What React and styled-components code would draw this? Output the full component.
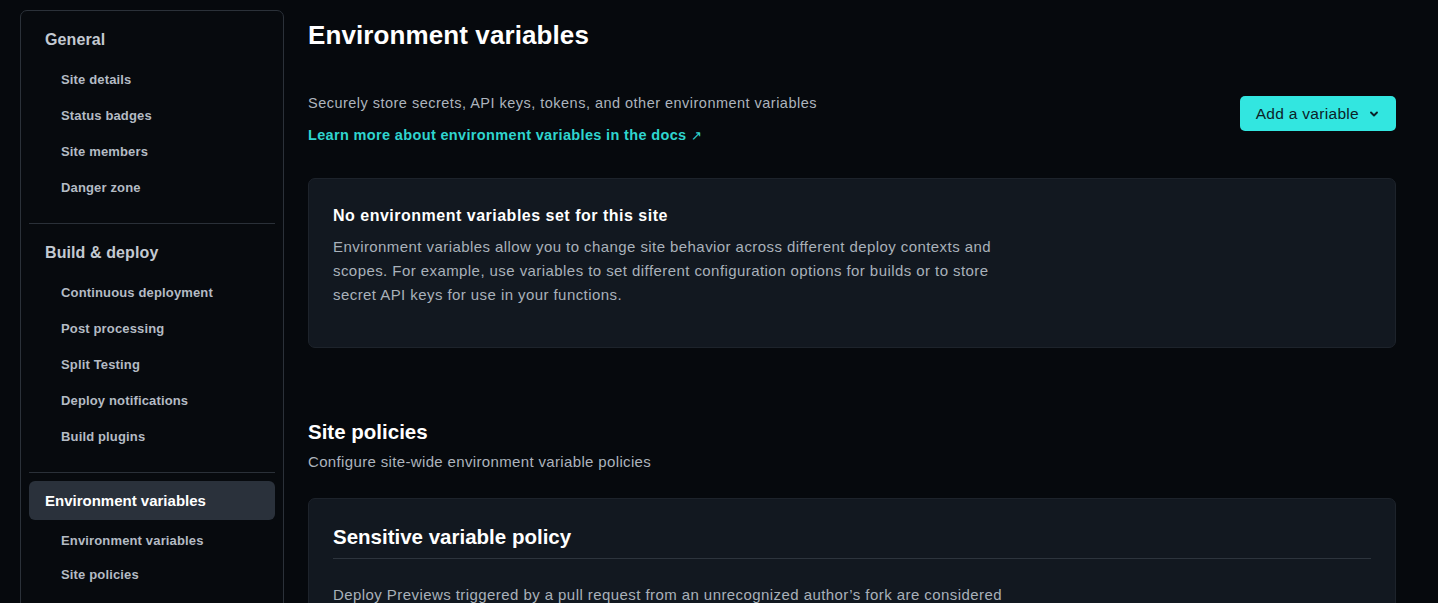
import React from "react";
import styled, { createGlobalStyle } from "styled-components";

const GlobalStyle = createGlobalStyle`
    body {
        margin: 0;
        background: #06090d;
        font-family: "Liberation Sans", Arial, sans-serif;
        color: #e8ebef;
    }
`;

const nav = [
    {
        title: "General",
        items: ["Site details", "Status badges", "Site members", "Danger zone"],
    },
    {
        title: "Build & deploy",
        items: ["Continuous deployment", "Post processing", "Split Testing", "Deploy notifications", "Build plugins"],
    },
];

const Chevron = () => (
    <svg width="10" height="10" viewBox="0 0 10 10" fill="none">
        <path d="M2 3.5L5 6.5L8 3.5" stroke="#0b2328" strokeWidth="1.9" strokeLinecap="round" strokeLinejoin="round" />
    </svg>
);

const App = () => {
    return (
        <Page>
            <GlobalStyle />
            <Sidebar>
                {nav.map((group) => (
                    <Group key={group.title}>
                        <GroupTitle>{group.title}</GroupTitle>
                        {group.items.map((item) => (
                            <NavItem key={item}>{item}</NavItem>
                        ))}
                    </Group>
                ))}
                <ActiveGroup>
                    <ActiveItem>Environment variables</ActiveItem>
                    <SubItem>Environment variables</SubItem>
                    <SubItem>Site policies</SubItem>
                </ActiveGroup>
            </Sidebar>
            <Main>
                <PageTitle>Environment variables</PageTitle>
                <HeaderRow>
                    <div>
                        <Lead>Securely store secrets, API keys, tokens, and other environment variables</Lead>
                        <DocLink href="#">Learn more about environment variables in the docs <span>↗</span></DocLink>
                    </div>
                    <AddButton>
                        Add a variable
                        <Chevron />
                    </AddButton>
                </HeaderRow>
                <Card>
                    <CardTitle>No environment variables set for this site</CardTitle>
                    <CardText>
                        Environment variables allow you to change site behavior across different deploy contexts and
                        scopes. For example, use variables to set different configuration options for builds or to store
                        secret API keys for use in your functions.
                    </CardText>
                </Card>
                <SectionTitle>Site policies</SectionTitle>
                <SectionSub>Configure site-wide environment variable policies</SectionSub>
                <PolicyCard>
                    <PolicyTitle>Sensitive variable policy</PolicyTitle>
                    <CardText>
                        Deploy Previews triggered by a pull request from an unrecognized author’s fork are considered
                    </CardText>
                </PolicyCard>
            </Main>
        </Page>
    );
};

export default App;

const Page = styled.div`
    display: flex;
    gap: 24px;
    padding: 10px 42px 0 20px;
    height: 603px;
    overflow: hidden;
    box-sizing: border-box;
`;

const Sidebar = styled.nav`
    flex: 0 0 264px;
    box-sizing: border-box;
    border: 1px solid #2b3139;
    border-radius: 7px;
    background: #070a0e;
    padding: 0 8px;
    height: 640px;
`;

const Group = styled.div`
    padding: 11px 0 17px;
    border-bottom: 1px solid #2a3038;
`;

const GroupTitle = styled.div`
    padding-left: 16px;
    line-height: 36px;
    margin-bottom: 4px;
    font-size: 16px;
    font-weight: 600;
    color: #c3c9d1;
    letter-spacing: 0.1px;
`;

const NavItem = styled.div`
    padding-left: 32px;
    line-height: 36px;
    font-size: 13px;
    font-weight: 700;
    color: #b4bbc4;
    letter-spacing: 0.15px;
`;

const ActiveGroup = styled.div`
    padding-top: 8px;
`;

const ActiveItem = styled.div`
    height: 39px;
    line-height: 39px;
    padding-left: 16px;
    border-radius: 6px;
    background: #2a313b;
    color: #ffffff;
    font-size: 15px;
    font-weight: 700;
    margin-bottom: 4px;
`;

const SubItem = styled(NavItem)`
    line-height: 34px;
`;

const Main = styled.main`
    flex: 1;
    min-width: 0;
    padding-top: 7px;
`;

const PageTitle = styled.h1`
    margin: 0;
    font-size: 26px;
    line-height: 36px;
    font-weight: 700;
    color: #ffffff;
    letter-spacing: 0.1px;
`;

const HeaderRow = styled.div`
    display: flex;
    justify-content: space-between;
    align-items: flex-start;
    margin-top: 39px;
`;

const Lead = styled.p`
    margin: 0 0 10px;
    font-size: 14.5px;
    line-height: 22px;
    color: #adb4bd;
    letter-spacing: 0.48px;
`;

const DocLink = styled.a`
    display: block;
    font-size: 14.5px;
    line-height: 22px;
    font-weight: 700;
    color: #2fd5cf;
    text-decoration: none;
    letter-spacing: 0.35px;

    span {
        font-weight: 400;
        font-size: 13px;
    }
`;

const AddButton = styled.button`
    margin-top: 4px;
    display: flex;
    align-items: center;
    gap: 10px;
    height: 35px;
    padding: 0 17px 0 16px;
    border: none;
    border-radius: 5px;
    background: #32e6e0;
    color: #0b2328;
    font-family: inherit;
    font-size: 15.5px;
    font-weight: 500;
    letter-spacing: 0.3px;
    cursor: pointer;
`;

const Card = styled.section`
    margin-top: 31px;
    box-sizing: border-box;
    border: 1px solid #1d232b;
    border-radius: 7px;
    background: #121820;
    padding: 24px 24px 40px;
`;

const CardTitle = styled.h3`
    margin: 0 0 6px;
    font-size: 16px;
    line-height: 26px;
    font-weight: 700;
    color: #ffffff;
    letter-spacing: 0.5px;
`;

const CardText = styled.p`
    margin: 0;
    max-width: 680px;
    font-size: 15px;
    line-height: 24px;
    color: #a9b1ba;
    letter-spacing: 0.43px;
`;

const SectionTitle = styled.h2`
    margin: 69px 0 4px;
    font-size: 20.5px;
    line-height: 30px;
    font-weight: 700;
    color: #ffffff;
`;

const SectionSub = styled.p`
    margin: 0;
    font-size: 15px;
    line-height: 22px;
    color: #adb4bd;
    letter-spacing: 0.35px;
`;

const PolicyCard = styled(Card)`
    margin-top: 25px;
    padding: 23px 24px 40px;
`;

const PolicyTitle = styled.h3`
    margin: 0 0 24px;
    padding-bottom: 6px;
    border-bottom: 1px solid #2d343d;
    font-size: 20.5px;
    line-height: 30px;
    font-weight: 700;
    color: #ffffff;
`;
